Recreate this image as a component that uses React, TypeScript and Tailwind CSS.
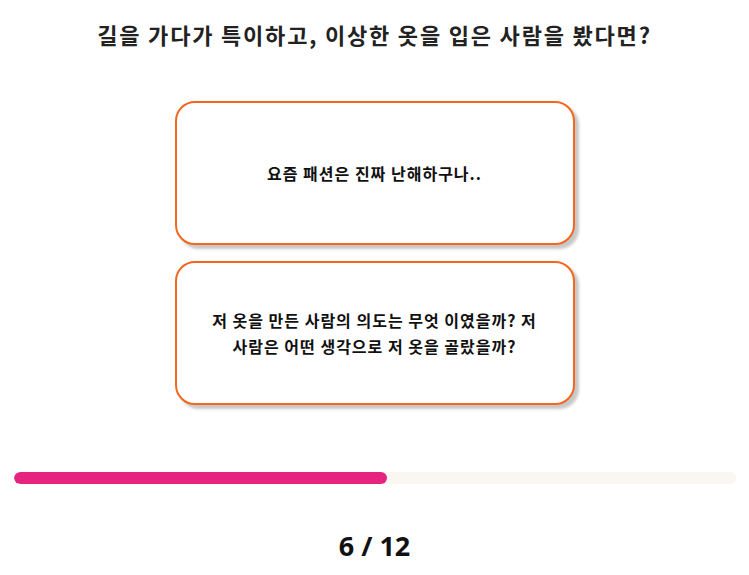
export default function App() {
  const current = 6
  const total = 12
  const font = { fontFamily: '"Noto Sans CJK KR", "Noto Sans", sans-serif' }
  return (
    <div className="w-[749px] h-[575px] bg-white flex flex-col items-center text-[#111]" style={font}>
      <h1 className="mt-5 text-[22px] leading-[28px] tracking-[1.8px] font-bold text-[#222]">
        길을 가다가 특이하고, 이상한 옷을 입은 사람을 봤다면?
      </h1>
      <div className="mt-[53px] flex flex-col gap-4">
        {['요즘 패션은 진짜 난해하구나..', '저 옷을 만든 사람의 의도는 무엇 이였을까? 저 사람은 어떤 생각으로 저 옷을 골랐을까?'].map((t) => (
          <button
            key={t}
            className="w-[400px] h-[144px] rounded-[20px] border-2 border-[#f5661f] bg-white shadow-[4px_4px_3px_rgba(0,0,0,0.22)] flex items-center justify-center px-6 text-[16px] leading-[26px] tracking-[1px] font-bold text-center break-keep"
          >
            {t}
          </button>
        ))}
      </div>
      <div className="mt-[67px] w-[722px] h-3 rounded-full bg-[#faf7f2] overflow-hidden">
        <div className="h-full rounded-full bg-[#e6247f]" style={{ width: `${(373 / 722) * 100}%` }} />
      </div>
      <div
        className="mt-[46px] text-[27px] leading-[32px] font-bold"
        style={{ fontFamily: '"Noto Sans", "Noto Sans CJK KR", sans-serif' }}
      >
        {current} / {total}
      </div>
    </div>
  )
}
